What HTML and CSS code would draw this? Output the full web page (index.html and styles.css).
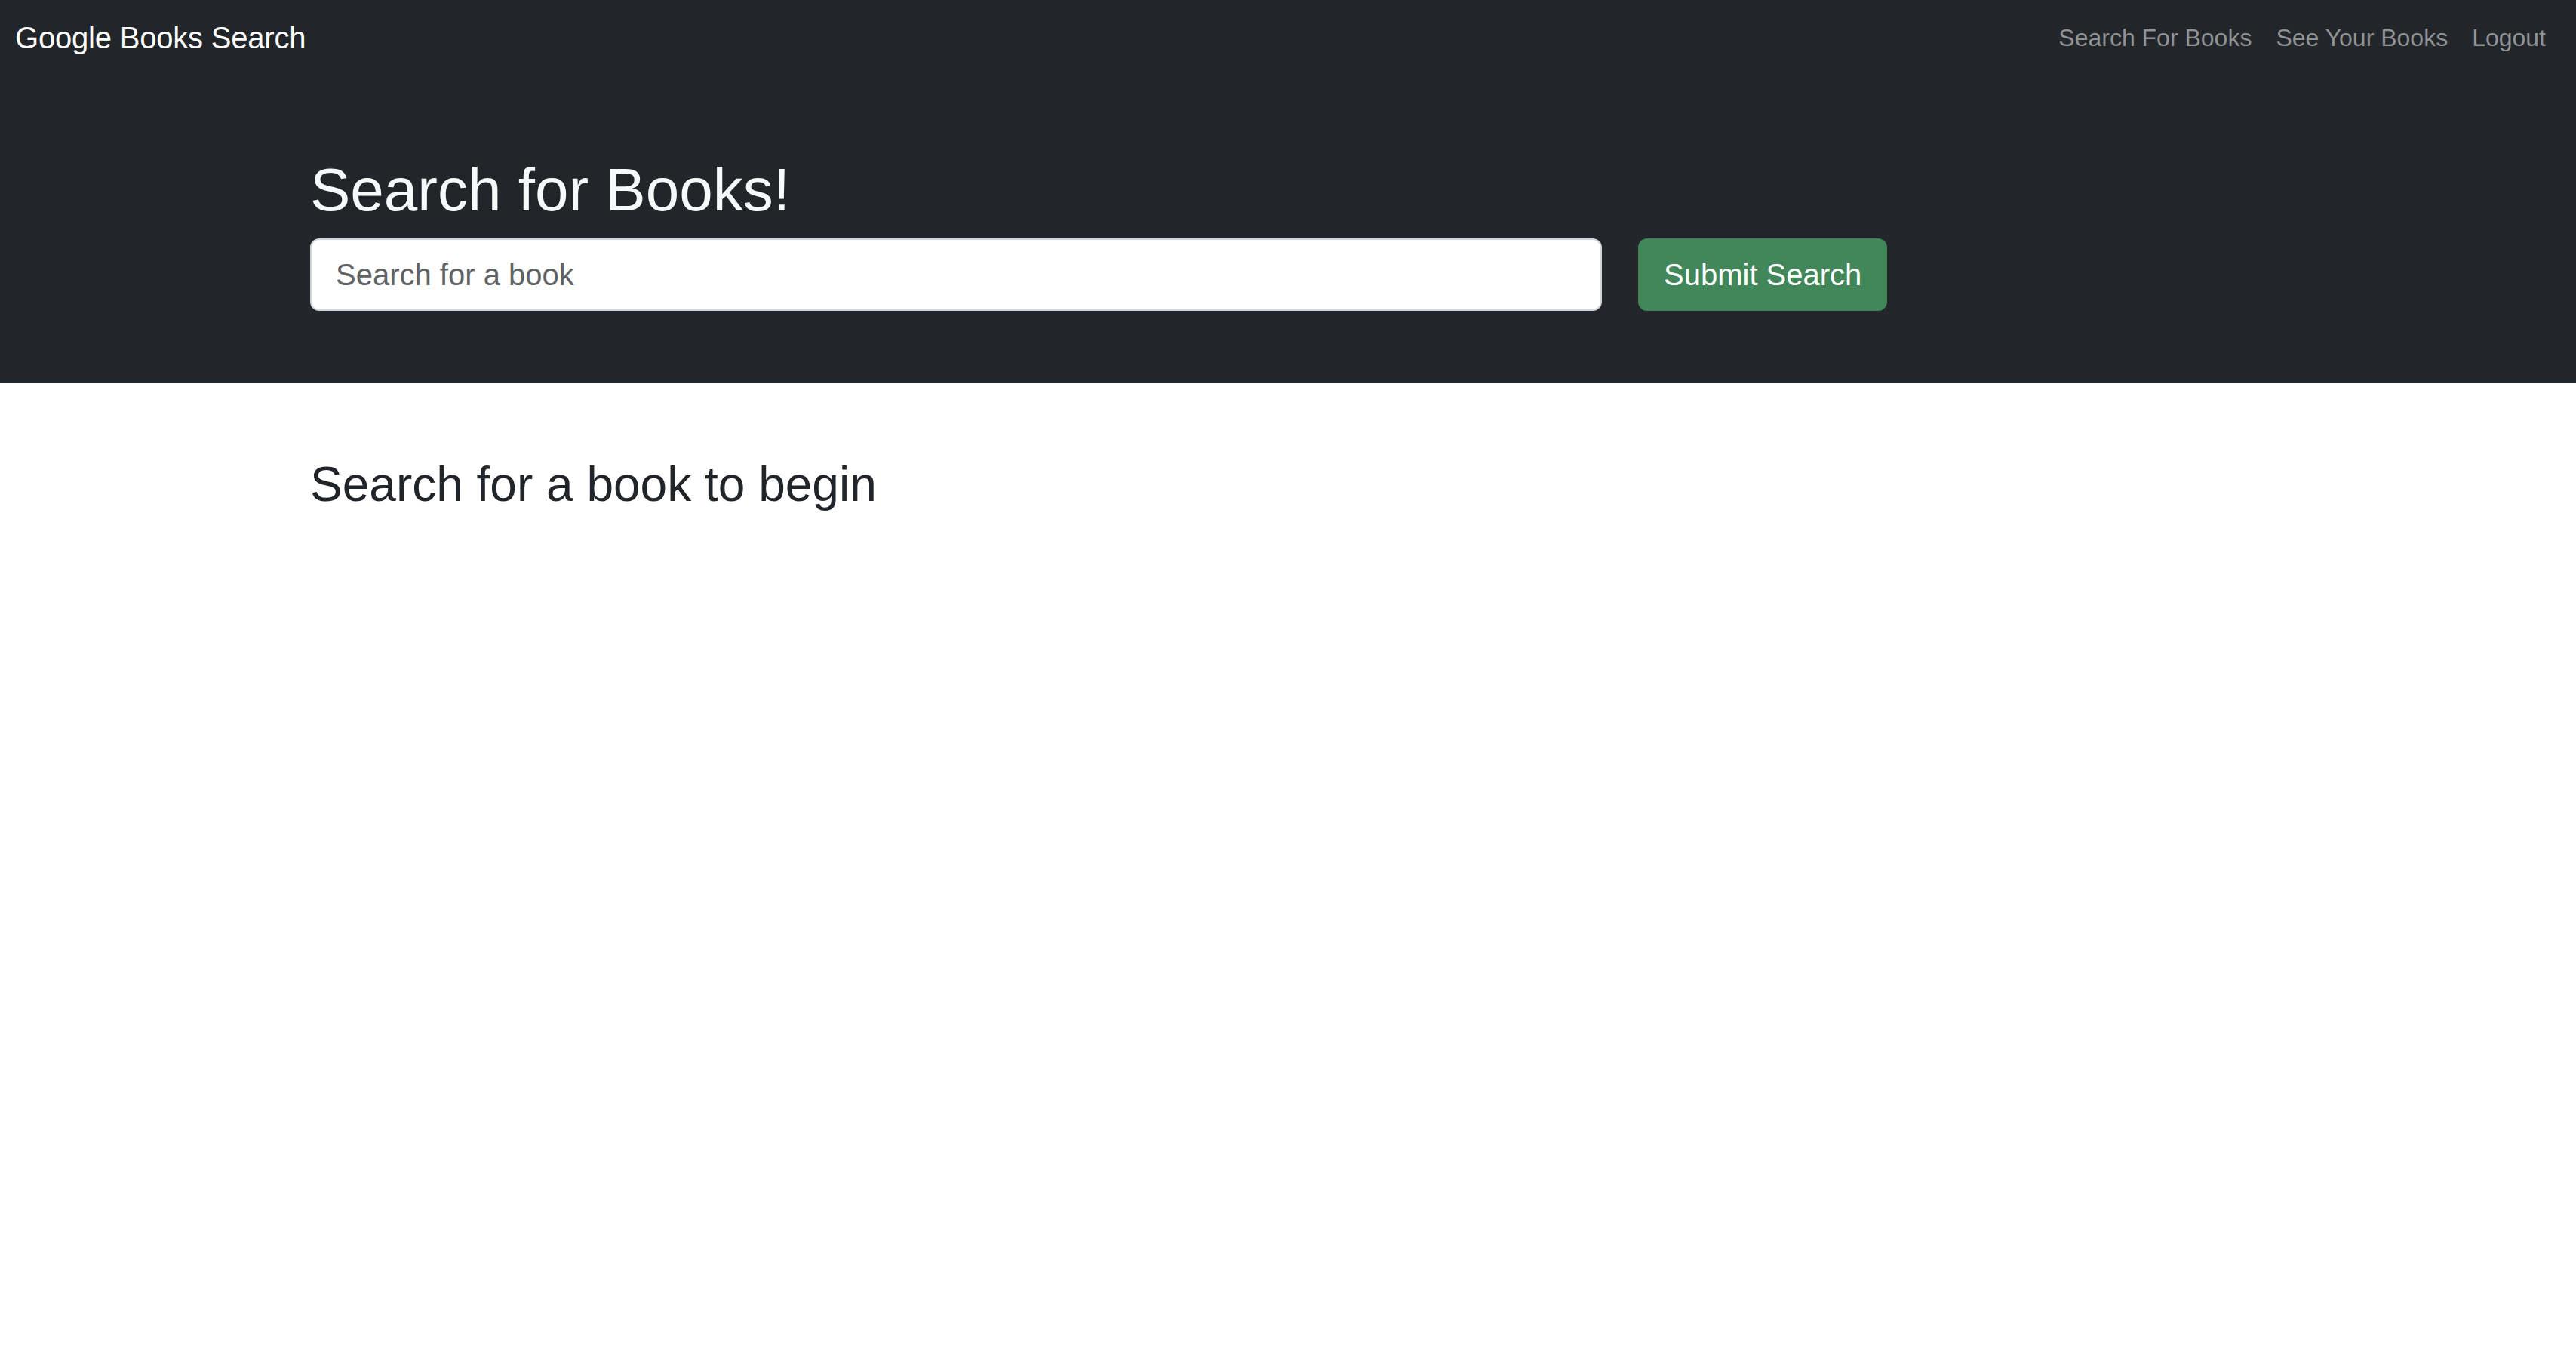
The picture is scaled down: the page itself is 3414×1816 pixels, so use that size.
FILE: index.html
```html
<!DOCTYPE html>
<html lang="en">
<head>
<meta charset="utf-8">
<title>Google Books Search</title>
<link rel="stylesheet" href="styles.css">
</head>
<body>
<nav class="navbar">
  <a class="brand" href="#">Google Books Search</a>
  <div class="nav-links">
    <a class="nav-link" href="#">Search For Books</a>
    <a class="nav-link" href="#">See Your Books</a>
    <a class="nav-link" href="#">Logout</a>
  </div>
</nav>
<header class="hero">
  <div class="container">
    <h1 class="hero-title">Search for Books!</h1>
    <form class="row">
      <div class="col-8">
        <input class="search-input" type="text" placeholder="Search for a book">
      </div>
      <div class="col-4">
        <button class="btn-submit" type="submit">Submit Search</button>
      </div>
    </form>
  </div>
</header>
<main class="container">
  <h2 class="results-title">Search for a book to begin</h2>
</main>
</body>
</html>
```
FILE: styles.css
```css
* { box-sizing: border-box; }

body {
  margin: 0;
  font-family: "Liberation Sans", Arial, Helvetica, sans-serif;
  color: #212529;
  background: #fff;
}

.navbar {
  background: #222529;
  display: flex;
  justify-content: space-between;
  align-items: flex-start;
  padding: 10px 24px 14px 20px;
}

.brand {
  color: #fff;
  text-decoration: none;
  font-size: 40px;
  line-height: 60px;
  padding: 10px 0;
  letter-spacing: -0.2px;
}

.nav-links {
  display: flex;
}

.nav-link {
  color: #909295;
  text-decoration: none;
  font-size: 32px;
  line-height: 48px;
  padding: 16px 16px;
}

.hero {
  background: #222529;
  color: #f8f9fa;
  padding: 100px 0 96px;
}

.container {
  max-width: 2640px;
  margin: 0 auto;
  padding: 0 24px;
}

.hero-title {
  margin: 0 0 16px;
  font-size: 80px;
  line-height: 96px;
  font-weight: 400;
}

.row {
  display: flex;
  margin: 0 -24px;
}

.col-8 {
  flex: 0 0 66.666667%;
  padding: 0 24px;
}

.col-4 {
  flex: 0 0 33.333333%;
  padding: 0 24px;
}

.search-input {
  display: block;
  width: 100%;
  font-family: inherit;
  font-size: 40px;
  line-height: 60px;
  padding: 16px 32px;
  border: 2px solid #ced4da;
  border-radius: 12px;
  background: #fff;
  color: #212529;
}
.search-input::placeholder { color: #5f6366; }

.btn-submit {
  font-family: inherit;
  font-size: 40px;
  line-height: 60px;
  padding: 16px 32px;
  border: 2px solid #41875a;
  border-radius: 12px;
  background: #41875a;
  color: #fff;
  cursor: pointer;
}

.results-title {
  margin: 0;
  padding-top: 96px;
  font-size: 64px;
  line-height: 76.8px;
  font-weight: 400;
  color: #212529;
}
```
